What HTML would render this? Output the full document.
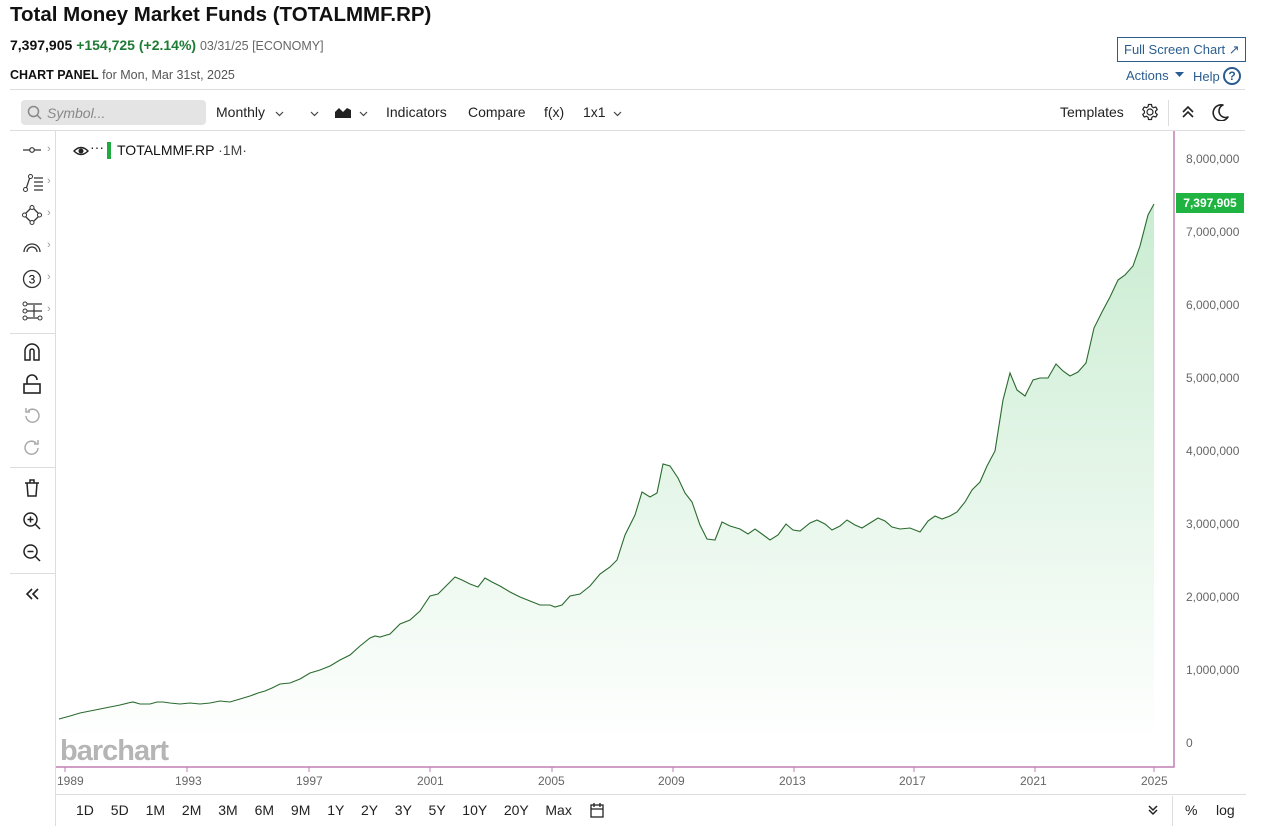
<!DOCTYPE html>
<html><head><meta charset="utf-8"><style>
*{margin:0;padding:0;box-sizing:border-box}
body{width:1261px;height:826px;background:#fff;font-family:"Liberation Sans",sans-serif;color:#222;position:relative;overflow:hidden}
.a{position:absolute;white-space:nowrap}
.tb{font-size:14px;color:#222}
.yl{font-size:12px;color:#666;left:1186px}
.xl{font-size:12px;color:#666}
.rb{font-size:14px;color:#222;top:802px}
.ch{position:absolute;left:47px;color:#999;font-size:11px}
</style></head><body>
<div class="a" style="left:10px;top:3px;font-size:20.5px;font-weight:bold;color:#111">Total Money Market Funds (TOTALMMF.RP)</div>
<div class="a" style="left:10px;top:37px;font-size:14px"><b style="color:#111">7,397,905</b> <b style="color:#1e7b34">+154,725 (+2.14%)</b> <span style="color:#666;font-size:12.5px">03/31/25 [ECONOMY]</span></div>
<div class="a" style="left:10px;top:68px;font-size:12.5px"><b style="color:#111">CHART PANEL</b> <span style="color:#555">for Mon, Mar 31st, 2025</span></div>
<div class="a" style="left:1117px;top:37px;width:129px;height:25px;border:1px solid #2a5d8f;color:#2a5d8f;font-size:13px;padding:4px 0 0 6px">Full Screen Chart ↗</div>
<div class="a" style="left:1126px;top:68px;font-size:13px;color:#2a5d8f">Actions</div>
<svg class="a" style="left:1175px;top:72px" width="10" height="6"><path d="M0 0h9L4.5 5z" fill="#2a5d8f"/></svg>
<div class="a" style="left:1193px;top:69px;font-size:13px;color:#2a5d8f">Help</div>
<div class="a" style="left:1223px;top:67px;width:18px;height:18px;border:2px solid #2a5d8f;border-radius:50%;color:#2a5d8f;font-size:12px;font-weight:bold;text-align:center;line-height:14px">?</div>
<div class="a" style="left:10px;top:89px;width:1235px;border-top:1px solid #ddd"></div>
<div class="a" style="left:21px;top:100px;width:185px;height:25px;background:#e4e4e4;border-radius:4px"></div>
<svg class="a" style="left:27px;top:105px" width="16" height="16"><circle cx="6.5" cy="6.5" r="5" fill="none" stroke="#888" stroke-width="1.5"/><path d="M10 10l4 4" stroke="#888" stroke-width="1.5"/></svg>
<div class="a" style="left:47px;top:105px;font-size:14px;color:#888;font-style:italic">Symbol...</div>
<div class="a tb" style="left:216px;top:104px">Monthly</div>
<svg class="a" style="left:275px;top:111px" width="9" height="6"><path d="M1 1l3.5 3.5L8 1" fill="none" stroke="#444" stroke-width="1.2"/></svg>
<svg class="a" style="left:310px;top:111px" width="9" height="6"><path d="M1 1l3.5 3.5L8 1" fill="none" stroke="#444" stroke-width="1.2"/></svg>
<svg class="a" style="left:335px;top:106px" width="16" height="12"><path d="M0 12V6l4-4 4 4 4-4 4 2v8z" fill="#222"/></svg>
<svg class="a" style="left:359px;top:111px" width="9" height="6"><path d="M1 1l3.5 3.5L8 1" fill="none" stroke="#444" stroke-width="1.2"/></svg>
<div class="a tb" style="left:386px;top:104px">Indicators</div>
<div class="a tb" style="left:468px;top:104px">Compare</div>
<div class="a tb" style="left:544px;top:104px">f(x)</div>
<div class="a tb" style="left:583px;top:104px">1x1</div>
<svg class="a" style="left:613px;top:111px" width="9" height="6"><path d="M1 1l3.5 3.5L8 1" fill="none" stroke="#444" stroke-width="1.2"/></svg>
<div class="a tb" style="left:1060px;top:104px">Templates</div>
<svg class="a" style="left:1141px;top:103px" width="18" height="18" viewBox="0 0 24 24"><path d="M12 8a4 4 0 1 0 0 8 4 4 0 0 0 0-8zM10 2h4l.6 3 2.2 1.3 2.9-1 2 3.4-2.3 2v2.6l2.3 2-2 3.4-2.9-1-2.2 1.3-.6 3h-4l-.6-3-2.2-1.3-2.9 1-2-3.4 2.3-2v-2.6l-2.3-2 2-3.4 2.9 1L9.4 5z" fill="none" stroke="#222" stroke-width="1.6" stroke-linejoin="round"/></svg>
<div class="a" style="left:1168px;top:100px;height:26px;border-left:1px solid #ddd"></div>
<svg class="a" style="left:1181px;top:105px" width="14" height="14"><path d="M2 7l5-5 5 5M2 12l5-5 5 5" fill="none" stroke="#222" stroke-width="1.6"/></svg>
<svg class="a" style="left:1211px;top:103px" width="18" height="18"><path d="M12 2A8 8 0 1 0 17 14 6.5 6.5 0 0 1 12 2z" fill="none" stroke="#222" stroke-width="1.6" stroke-linejoin="round"/></svg>
<div class="a" style="left:10px;top:130px;width:1235px;border-top:1px solid #ddd"></div>
<div class="a" style="left:55px;top:131px;height:695px;border-left:1px solid #ddd"></div>
<!-- left toolbar -->
<svg class="a" style="left:22px;top:145px" width="20" height="10"><path d="M1 5h18" stroke="#333" stroke-width="1.2"/><circle cx="10" cy="5" r="2.3" fill="#fff" stroke="#333" stroke-width="1.2"/></svg>
<div class="ch" style="top:143px">›</div><div class="ch" style="top:175px">›</div><div class="ch" style="top:207px">›</div><div class="ch" style="top:239px">›</div><div class="ch" style="top:271px">›</div><div class="ch" style="top:303px">›</div>
<svg class="a" style="left:22px;top:173px" width="22" height="20"><path d="M4 16L8 4" stroke="#333" stroke-width="1.2"/><circle cx="3.5" cy="16.5" r="2" fill="#fff" stroke="#333"/><circle cx="8.5" cy="3.5" r="2" fill="#fff" stroke="#333"/><path d="M12 5h9M12 9h9M12 13h9M12 17h9" stroke="#333" stroke-width="1.2"/></svg>
<svg class="a" style="left:22px;top:205px" width="20" height="20"><path d="M10 2L18 10 10 18 2 10z" fill="none" stroke="#333" stroke-width="1.3"/><circle cx="10" cy="2.5" r="2" fill="#fff" stroke="#333"/><circle cx="17.5" cy="10" r="2" fill="#fff" stroke="#333"/><circle cx="10" cy="17.5" r="2" fill="#fff" stroke="#333"/><circle cx="2.5" cy="10" r="2" fill="#fff" stroke="#333"/></svg>
<svg class="a" style="left:22px;top:238px" width="20" height="16"><path d="M2 14A8 8 0 0 1 18 14M5 14A5 5 0 0 1 15 14" fill="none" stroke="#333" stroke-width="1.3"/></svg>
<svg class="a" style="left:22px;top:269px" width="20" height="20"><circle cx="10" cy="10" r="8.5" fill="none" stroke="#333" stroke-width="1.3"/><text x="10" y="14.5" font-size="12" text-anchor="middle" font-family="Liberation Sans">3</text></svg>
<svg class="a" style="left:22px;top:301px" width="22" height="20"><path d="M5 3h15M5 10h15M5 17h15M12 4v12" stroke="#333" stroke-width="1.2"/><circle cx="3" cy="3" r="2" fill="#fff" stroke="#333"/><circle cx="3" cy="10" r="2" fill="#fff" stroke="#333"/><circle cx="3" cy="17" r="2" fill="#fff" stroke="#333"/><circle cx="18" cy="17" r="2" fill="#fff" stroke="#333"/></svg>
<div class="a" style="left:10px;top:333px;width:45px;border-top:1px solid #ddd"></div>
<svg class="a" style="left:22px;top:342px" width="20" height="20"><path d="M3 18V9a7 7 0 0 1 14 0v9h-5V9a2 2 0 0 0-4 0v9z" fill="none" stroke="#222" stroke-width="1.5"/></svg>
<svg class="a" style="left:22px;top:374px" width="20" height="20"><rect x="2" y="10" width="16" height="9" fill="none" stroke="#222" stroke-width="1.6"/><path d="M5 10V6a5 5 0 0 1 10 0" fill="none" stroke="#222" stroke-width="1.6"/></svg>
<svg class="a" style="left:22px;top:406px" width="20" height="20"><path d="M4 10a6.5 6.5 0 1 0 2-5M4 2v4h4" fill="none" stroke="#aaa" stroke-width="1.5"/></svg>
<svg class="a" style="left:22px;top:438px" width="20" height="20"><path d="M16 10a6.5 6.5 0 1 1-2-5M16 2v4h-4" fill="none" stroke="#aaa" stroke-width="1.5"/></svg>
<div class="a" style="left:10px;top:467px;width:45px;border-top:1px solid #ddd"></div>
<svg class="a" style="left:22px;top:478px" width="20" height="20"><path d="M3 5h14M8 5V2h4v3M5 5l1 13h8l1-13" fill="none" stroke="#222" stroke-width="1.5"/></svg>
<svg class="a" style="left:22px;top:511px" width="20" height="20"><circle cx="8.5" cy="8.5" r="6.5" fill="none" stroke="#222" stroke-width="1.5"/><path d="M13 13l5 5M5.5 8.5h6M8.5 5.5v6" stroke="#222" stroke-width="1.5"/></svg>
<svg class="a" style="left:22px;top:543px" width="20" height="20"><circle cx="8.5" cy="8.5" r="6.5" fill="none" stroke="#222" stroke-width="1.5"/><path d="M13 13l5 5M5.5 8.5h6" stroke="#222" stroke-width="1.5"/></svg>
<div class="a" style="left:10px;top:573px;width:45px;border-top:1px solid #ddd"></div>
<svg class="a" style="left:25px;top:587px" width="16" height="14"><path d="M7 2L2 7l5 5M13 2L8 7l5 5" fill="none" stroke="#222" stroke-width="1.6"/></svg>
<!-- legend -->
<svg class="a" style="left:73px;top:145px" width="16" height="12"><path d="M1 6Q8-1 15 6Q8 13 1 6z" fill="none" stroke="#222" stroke-width="1.4"/><circle cx="8" cy="6" r="2.5" fill="#222"/></svg>
<div class="a" style="left:90px;top:139px;font-size:14px">···</div>
<div class="a" style="left:107px;top:142px;width:4px;height:17px;background:#1fab3f"></div>
<div class="a" style="left:117px;top:142px;font-size:14px;color:#111">TOTALMMF.RP <span style="color:#444">·1M·</span></div>
<!-- chart -->
<svg class="a" style="left:0;top:0" width="1261" height="826">
<defs><linearGradient id="g" x1="0" y1="0" x2="0" y2="1"><stop offset="0" stop-color="#c9ecd1"/><stop offset="1" stop-color="#fff"/></linearGradient></defs>
<path d="M59,719 70,716 80,713 90,711 100,709 110,707 120,705 128,703 133,702 140,704 150,704 157,702 163,702 170,703 180,704 190,703 200,704 210,703 220,701 230,702 240,699 250,696 258,693 265,691 272,688 280,684 290,683 300,679 310,673 320,670 330,666 340,660 350,655 360,646 370,638 375,636 380,637 390,634 400,624 410,620 420,611 430,596 438,594 445,587 455,577 462,580 470,584 478,587 485,578 492,582 500,586 510,592 520,597 530,601 540,605 550,605 555,607 562,605 570,596 580,594 590,586 600,574 610,567 617,560 625,535 635,515 642,492 650,497 657,493 663,464 670,466 678,478 685,493 692,502 700,525 707,539 715,540 722,522 730,526 740,529 748,534 755,529 762,534 770,540 778,535 786,524 793,530 800,531 810,523 817,520 825,524 832,530 840,526 847,520 855,525 862,528 870,523 878,518 885,521 892,527 900,529 910,528 920,532 928,521 935,516 942,519 950,516 957,512 965,502 972,490 980,482 987,466 995,451 1003,400 1010,373 1017,390 1025,396 1033,380 1040,378 1048,378 1056,364 1063,371 1070,376 1078,372 1086,363 1094,328 1102,312 1110,297 1118,280 1125,275 1133,266 1140,246 1148,215 1154,204 1154,743 59,743Z" fill="url(#g)"/>
<polyline points="59,719 70,716 80,713 90,711 100,709 110,707 120,705 128,703 133,702 140,704 150,704 157,702 163,702 170,703 180,704 190,703 200,704 210,703 220,701 230,702 240,699 250,696 258,693 265,691 272,688 280,684 290,683 300,679 310,673 320,670 330,666 340,660 350,655 360,646 370,638 375,636 380,637 390,634 400,624 410,620 420,611 430,596 438,594 445,587 455,577 462,580 470,584 478,587 485,578 492,582 500,586 510,592 520,597 530,601 540,605 550,605 555,607 562,605 570,596 580,594 590,586 600,574 610,567 617,560 625,535 635,515 642,492 650,497 657,493 663,464 670,466 678,478 685,493 692,502 700,525 707,539 715,540 722,522 730,526 740,529 748,534 755,529 762,534 770,540 778,535 786,524 793,530 800,531 810,523 817,520 825,524 832,530 840,526 847,520 855,525 862,528 870,523 878,518 885,521 892,527 900,529 910,528 920,532 928,521 935,516 942,519 950,516 957,512 965,502 972,490 980,482 987,466 995,451 1003,400 1010,373 1017,390 1025,396 1033,380 1040,378 1048,378 1056,364 1063,371 1070,376 1078,372 1086,363 1094,328 1102,312 1110,297 1118,280 1125,275 1133,266 1140,246 1148,215 1154,204" fill="none" stroke="#2a6a2e" stroke-width="1.1"/>
<path d="M1174 131V767H56" fill="none" stroke="#c27fb6" stroke-width="1.5"/>
<g stroke="#c27fb6" stroke-width="1"><path d="M65 767v5M187 767v5M309 767v5M430 767v5M552 767v5M673 767v5M794 767v5M914 767v5M1035 767v5M1154 767v5"/></g>
<text x="60" y="760" font-family="Liberation Sans" font-weight="bold" font-size="29" fill="#b5b5b5" letter-spacing="-1">barchart</text>
</svg>
<div class="a" style="left:1176px;top:193px;width:68px;height:20px;background:#1fb442;color:#fff;font-size:12px;font-weight:bold;text-align:center;line-height:20px">7,397,905</div>
<div class="a yl" style="top:152px">8,000,000</div>
<div class="a yl" style="top:225px">7,000,000</div>
<div class="a yl" style="top:298px">6,000,000</div>
<div class="a yl" style="top:371px">5,000,000</div>
<div class="a yl" style="top:444px">4,000,000</div>
<div class="a yl" style="top:517px">3,000,000</div>
<div class="a yl" style="top:590px">2,000,000</div>
<div class="a yl" style="top:663px">1,000,000</div>
<div class="a yl" style="top:736px">0</div>
<div class="a xl" style="left:57px;top:774px">1989</div>
<div class="a xl" style="left:175px;top:774px">1993</div>
<div class="a xl" style="left:296px;top:774px">1997</div>
<div class="a xl" style="left:417px;top:774px">2001</div>
<div class="a xl" style="left:538px;top:774px">2005</div>
<div class="a xl" style="left:658px;top:774px">2009</div>
<div class="a xl" style="left:779px;top:774px">2013</div>
<div class="a xl" style="left:899px;top:774px">2017</div>
<div class="a xl" style="left:1020px;top:774px">2021</div>
<div class="a xl" style="left:1141px;top:774px">2025</div>
<div class="a" style="left:56px;top:794px;width:1190px;border-top:1px solid #ddd"></div>
<div class="a rb" style="left:76px;word-spacing:13px">1D 5D 1M 2M 3M 6M 9M 1Y 2Y 3Y 5Y 10Y 20Y Max</div>
<svg class="a" style="left:589px;top:802px" width="16" height="16"><rect x="2" y="3" width="12" height="12" fill="none" stroke="#222" stroke-width="1.3"/><path d="M2 7h12M5 1v4M11 1v4" stroke="#222" stroke-width="1.3"/></svg>
<svg class="a" style="left:1147px;top:804px" width="12" height="12"><path d="M2 2l4 4 4-4M2 6l4 4 4-4" fill="none" stroke="#222" stroke-width="1.5"/></svg>
<div class="a" style="left:1172px;top:796px;height:30px;border-left:1px solid #ddd"></div>
<div class="a rb" style="left:1185px">%</div>
<div class="a rb" style="left:1216px">log</div>
</body></html>
